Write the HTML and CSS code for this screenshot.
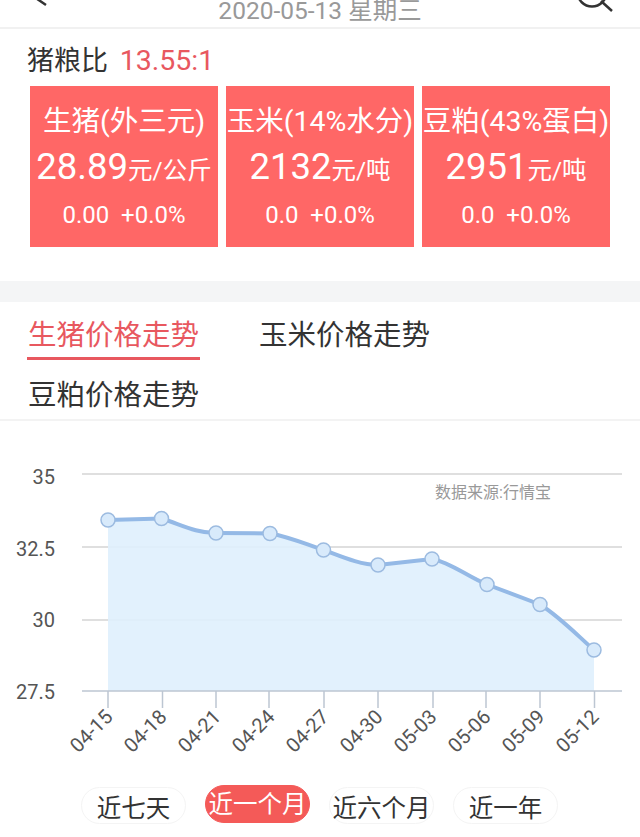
FILE: index.html
```html
<!DOCTYPE html>
<html lang="zh-CN">
<head>
  <meta charset="UTF-8">
  <title>猪粮比</title>
  <link rel="stylesheet" href="styles.css">
</head>
<body>

<header class="topbar">
  <svg class="icon" width="49" height="27" viewBox="-9 0 49 27"><path d="M11 -8 L1.500 -1.500 L11 5" fill="none" stroke="#333" stroke-width="2.500"/></svg>
  <div class="date">2020-05-13 星期三</div>
  <svg class="icon" width="49" height="27" viewBox="-9 0 49 27"><circle cx="18" cy="-8" r="14.500" fill="none" stroke="#333" stroke-width="2.500"/><path d="M27 1 L38 11" fill="none" stroke="#333" stroke-width="2.500"/></svg>
</header>

<section class="summary">
  <div class="ratio">猪粮比 <span class="ratio-value">13.55:1</span></div>
  <div class="cards">
    <div class="card">
      <div class="card-name">生猪(外三元)</div>
      <div class="card-price">28.89<span class="unit">元/公斤</span></div>
      <div class="card-change">0.00&nbsp;&nbsp;+0.0%</div>
    </div>
    <div class="card">
      <div class="card-name">玉米(14%水分)</div>
      <div class="card-price">2132<span class="unit">元/吨</span></div>
      <div class="card-change">0.0&nbsp;&nbsp;+0.0%</div>
    </div>
    <div class="card">
      <div class="card-name">豆粕(43%蛋白)</div>
      <div class="card-price">2951<span class="unit">元/吨</span></div>
      <div class="card-change">0.0&nbsp;&nbsp;+0.0%</div>
    </div>
  </div>
</section>

<nav class="tabs">
  <div class="tab active">生猪价格走势</div>
  <div class="tab">玉米价格走势</div>
  <div class="tab">豆粕价格走势</div>
</nav>

<svg class="chart" width="640" height="352" viewBox="0 421 640 352">
  <g stroke="#d4d4d4" stroke-width="1.500">
    <line x1="82" y1="474" x2="622" y2="474"/>
    <line x1="82" y1="547" x2="622" y2="547"/>
    <line x1="82" y1="620" x2="622" y2="620"/>
  </g>
  <path fill="#dfeffd" fill-opacity="0.9" d="M108 520 L161.500 518.500 C180 524 195 533 216 533 L270 533.500 C290 537 305 544 323.500 550 C340 556 360 565 378 565 L432 559 C450 562 468 577 487 584.500 L540 604.500 C560 617 578 636 594 650 L594 691 L108 691 Z"/>
  <g stroke="#bcc6d2" stroke-width="1.500">
    <line x1="82" y1="691" x2="622" y2="691"/>
    <line x1="108" y1="691" x2="108" y2="708"/>
    <line x1="162.500" y1="691" x2="162.500" y2="708"/>
    <line x1="216" y1="691" x2="216" y2="708"/>
    <line x1="269" y1="691" x2="269" y2="708"/>
    <line x1="324" y1="691" x2="324" y2="708"/>
    <line x1="378" y1="691" x2="378" y2="708"/>
    <line x1="433" y1="691" x2="433" y2="708"/>
    <line x1="486" y1="691" x2="486" y2="708"/>
    <line x1="540" y1="691" x2="540" y2="708"/>
    <line x1="594.500" y1="691" x2="594.500" y2="708"/>
  </g>
  <path fill="none" stroke="#94b9e6" stroke-width="4" d="M108 520 L161.500 518.500 C180 524 195 533 216 533 L270 533.500 C290 537 305 544 323.500 550 C340 556 360 565 378 565 L432 559 C450 562 468 577 487 584.500 L540 604.500 C560 617 578 636 594 650"/>
  <g fill="#d8eafb" stroke="#9cbbe0" stroke-width="1.500">
    <circle cx="108" cy="520" r="7"/>
    <circle cx="161.500" cy="518.500" r="7"/>
    <circle cx="216" cy="533" r="7"/>
    <circle cx="270" cy="533.500" r="7"/>
    <circle cx="323.500" cy="550" r="7"/>
    <circle cx="378" cy="565" r="7"/>
    <circle cx="432" cy="559" r="7"/>
    <circle cx="487" cy="584.500" r="7"/>
    <circle cx="540" cy="604.500" r="7"/>
    <circle cx="594" cy="650" r="7"/>
  </g>
  <g class="y-label" text-anchor="end">
    <text x="55" y="484">35</text>
    <text x="55" y="556">32.5</text>
    <text x="55" y="627">30</text>
    <text x="55" y="699">27.5</text>
  </g>
  <text class="source" x="435" y="498">数据来源:行情宝</text>
  <g class="x-label" text-anchor="end">
    <text transform="translate(114 718) rotate(-45)">04-15</text>
    <text transform="translate(168 718) rotate(-45)">04-18</text>
    <text transform="translate(222 718) rotate(-45)">04-21</text>
    <text transform="translate(276 718) rotate(-45)">04-24</text>
    <text transform="translate(330 718) rotate(-45)">04-27</text>
    <text transform="translate(384 718) rotate(-45)">04-30</text>
    <text transform="translate(438 718) rotate(-45)">05-03</text>
    <text transform="translate(492 718) rotate(-45)">05-06</text>
    <text transform="translate(546 718) rotate(-45)">05-09</text>
    <text transform="translate(600 718) rotate(-45)">05-12</text>
  </g>
</svg>

<div class="ranges">
  <div class="range">近七天</div>
  <div class="range active">近一个月</div>
  <div class="range">近六个月</div>
  <div class="range">近一年</div>
</div>

</body>
</html>
```

FILE: styles.css
```css
html, body {
  margin: 0;
  height: 837px;
  overflow: hidden;
}

body {
  font-family: Roboto, "Noto Sans CJK SC", sans-serif;
  background-color: #fff;
  color: #333;
}

.topbar {
  display: flex;
  justify-content: space-between;
  height: 27px;
  padding: 0 26px;
  border-bottom: 2px solid #f1f1f1;
  overflow: hidden;
}

.date {
  margin-top: -5px;
  font-size: 24.500px;
  line-height: 32px;
  color: #999;
}

.summary {
  height: 252px;
  border-bottom: 21px solid #f4f5f6;
  padding: 0 30px;
}

.ratio {
  height: 57px;
  margin-left: -3px;
  font-size: 27px;
  line-height: 64px;
}

.ratio-value {
  margin-left: 5px;
  font-size: 28.500px;
  color: #e8585f;
}

.cards {
  display: flex;
  gap: 8px;
}

.card {
  width: 188px;
  height: 161px;
  background-color: #ff6766;
  color: #fff;
  text-align: center;
  white-space: nowrap;
}

.card-name {
  display: flex;
  justify-content: center;
  padding-top: 16px;
  font-size: 28.500px;
  line-height: 40px;
}

.card-price {
  font-size: 36.500px;
  line-height: 50px;
}

.unit {
  font-size: 24.500px;
}

.card-change {
  font-size: 24px;
  line-height: 44px;
  margin-top: -3px;
}

.tabs {
  display: flex;
  flex-wrap: wrap;
  column-gap: 58px;
  height: 117px;
  padding: 0 27px;
  border-bottom: 2px solid #f3f3f3;
}

.tab {
  height: 57px;
  padding: 0 1px;
  font-size: 28.500px;
  line-height: 67px;
}

.tab.active {
  height: 55px;
  margin-bottom: 2px;
  color: #e8585f;
  border-bottom: 3px solid #e8585f;
}

.chart {
  display: block;
}

.y-label text {
  font-size: 20px;
  fill: #555;
}

.x-label text {
  font-size: 20px;
  fill: #555;
}

.source {
  font-size: 16px;
  fill: #999;
}

.ranges {
  display: flex;
  gap: 19px;
  padding-left: 81px;
  margin-top: 14px;
}

.range {
  box-sizing: border-box;
  width: 105px;
  height: 37px;
  border: 1px solid #f4f4f4;
  border-radius: 19px;
  font-size: 24.500px;
  line-height: 41px;
  text-align: center;
}

.range.active {
  height: 38px;
  margin-top: -2px;
  line-height: 38px;
  background-color: #f45a58;
  border-color: #f45a58;
  color: #fff;
}
```
